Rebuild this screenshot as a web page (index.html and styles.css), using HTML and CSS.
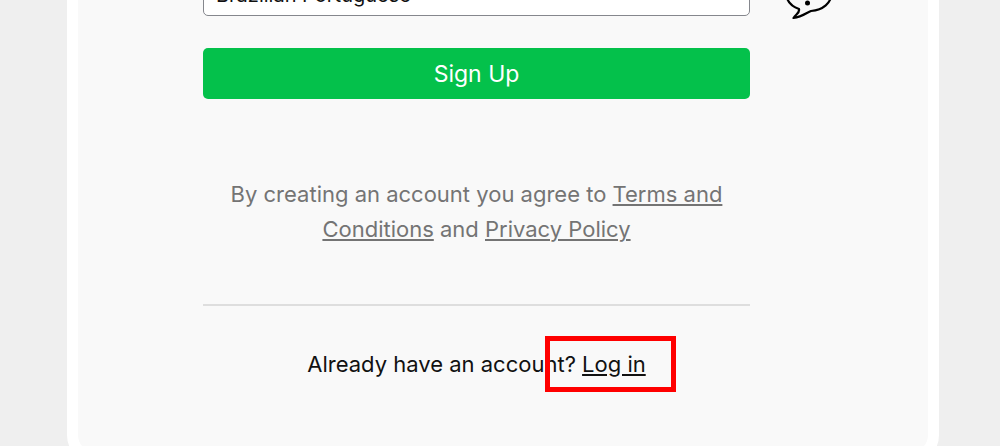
FILE: index.html
```html
<!DOCTYPE html>
<html lang="en">
<head>
    <meta charset="UTF-8">
    <meta name="viewport" content="width=device-width, initial-scale=1.0">
    <title>Sign Up</title>
    <link rel="stylesheet" href="styles.css">
</head>
<body>
<main class="card">
    <form class="signup">
        <div class="language-row">
            <select class="language" aria-label="Language">
                <option>Brazilian Portuguese</option>
            </select>
            <svg class="hint" width="48" height="44" viewBox="0 0 48 44" fill="none" stroke="#000" stroke-width="2.200" stroke-linejoin="round" aria-hidden="true">
                <path d="M14 33 C6 30 1.500 25 1.500 18 C1.500 8 11 2 24 2 C37 2 46.500 8 46.500 17 C46.500 27 38 34 26 35 C22 36.500 17 41 8.500 42 C11 38 15 37 14 33 Z"/>
                <circle cx="22.500" cy="27" r="2.500" fill="#000" stroke="none"/>
                <path d="M18 12 C19 7 28 7 28 13 C28 17 22 17 22 21"/>
            </svg>
        </div>
        <button type="submit" class="signup-btn">Sign Up</button>
        <p class="terms">By creating an account you agree to <a href="#">Terms and Conditions</a> and <a href="#">Privacy Policy</a></p>
        <hr class="divider">
        <p class="login">Already have an account? <a href="#" class="login-link">Log in</a></p>
    </form>
</main>
</body>
</html>
```
FILE: styles.css
```css
* {
    margin: 0;
    padding: 0;
    box-sizing: border-box;
}

html {
    height: 100%;
    overflow: hidden;
}

body {
    height: 100%;
    overflow: hidden;
    padding: 0 61px 0 67px;
    background: #efefef;
    font-family: Inter, "Liberation Sans", sans-serif;
    font-size: 22px;
    color: #111;
}

.card {
    margin-top: -85px;
    padding: 48px 178px 70px 125px;
    background: #f9f9f9;
    border: 11px solid #fff;
    border-radius: 28px;
}

.language-row {
    display: flex;
    align-items: flex-end;
    margin-right: -83px;
    gap: 35px;
}

.language {
    flex: 1;
    min-width: 0;
    height: 42px;
    margin-bottom: 4px;
    padding: 0 12px;
    appearance: none;
    background: #fff;
    border: 1px solid #85878d;
    border-radius: 5px;
    font: inherit;
    font-size: 20px;
    color: #111;
}

.hint {
    flex: none;
}

.signup-btn {
    display: block;
    width: 100%;
    height: 51px;
    margin-top: 28px;
    background: #04c14b;
    border: none;
    border-radius: 5px;
    font: inherit;
    font-size: 23px;
    color: #fff;
    cursor: pointer;
}

.terms {
    margin-top: 78px;
    line-height: 35px;
    text-align: center;
    color: #747474;
}

a {
    color: inherit;
    text-decoration-thickness: 2px;
    text-underline-offset: 2px;
}

.divider {
    margin-top: 57px;
    border: none;
    border-top: 2px solid #dedede;
}

.login {
    margin-top: 41px;
    line-height: 35px;
    text-align: center;
}

.login-link {
    position: relative;
}

/* marks the link to click */
.login-link::after {
    content: "";
    position: absolute;
    top: -15px;
    right: -30px;
    bottom: -15px;
    left: -37px;
    border: 5px solid #f00;
}
```
